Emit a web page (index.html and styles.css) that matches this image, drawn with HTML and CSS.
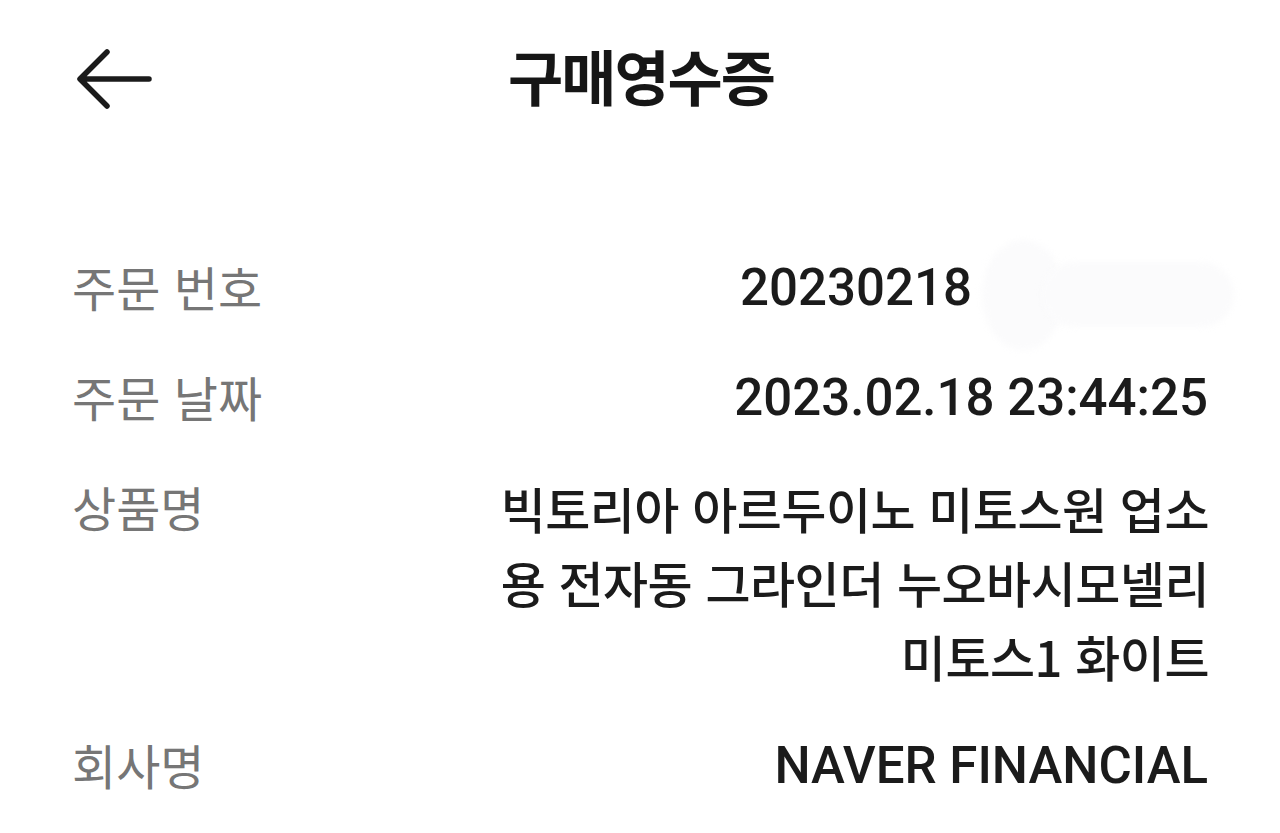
FILE: index.html
```html
<!DOCTYPE html>
<html lang="ko">
<head>
<meta charset="utf-8">
<title>구매영수증</title>
<link rel="stylesheet" href="styles.css">
</head>
<body>
<div class="screen">
  <header class="topbar">
    <div class="back">
      <svg class="back-icon" viewBox="0 0 76 60" width="76" height="60" aria-hidden="true">
        <path d="M73 30 H5 M31 3 L4 30 L31 57" fill="none" stroke="#1b1b1b" stroke-width="5.5" stroke-linecap="round" stroke-linejoin="round"/>
      </svg>
    </div>
    <h1 class="title">구매영수증</h1>
    <div class="spacer"></div>
  </header>

  <main class="rows">
    <div class="row">
      <div class="label">주문 번호</div>
      <div class="value num">20230218<span class="redact"></span></div>
    </div>
    <div class="row">
      <div class="label">주문 날짜</div>
      <div class="value num">2023.02.18 23:44:25</div>
    </div>
    <div class="row">
      <div class="label">상품명</div>
      <div class="value ko">빅토리아 아르두이노 미토스원 업소용 전자동 그라인더 누오바시모넬리 미토스1 화이트</div>
    </div>
    <div class="row">
      <div class="label">회사명</div>
      <div class="value num">NAVER FINANCIAL</div>
    </div>
  </main>
</div>
</body>
</html>
```

FILE: styles.css
```css
html, body {
  margin: 0;
  padding: 0;
  background: #ffffff;
}

body {
  font-family: Roboto, "Noto Sans CJK KR", sans-serif;
  color: #1b1b1b;
}

.screen {
  width: 1280px;
  height: 833px;
  overflow: hidden;
}

.topbar {
  height: 158px;
  display: grid;
  grid-template-columns: 1fr auto 1fr;
  align-items: center;
}

.back {
  padding-left: 76px;
  display: flex;
  align-items: center;
}

.back-icon {
  display: block;
}

.title {
  margin: -8px 0 0 0;
  font-family: "Noto Sans CJK KR", sans-serif;
  font-weight: 700;
  font-size: 60px;
  letter-spacing: -2px;
  line-height: 1;
  color: #161616;
  padding-left: 2px;
}

.rows {
  padding: 93px 72px 0 72px;
  display: flex;
  flex-direction: column;
  gap: 36px;
}

.row {
  display: flex;
  justify-content: space-between;
  align-items: flex-start;
}

.label {
  font-family: "Noto Sans CJK KR", sans-serif;
  font-size: 48px;
  line-height: 74px;
  color: #767676;
  white-space: nowrap;
  margin-top: -2px;
}

.value {
  text-align: right;
  line-height: 74px;
  color: #1b1b1b;
}

.value.num {
  font-family: Roboto, "Noto Sans CJK KR", sans-serif;
  font-weight: 500;
  font-size: 51px;
}

.value.ko {
  max-width: 732px;
  font-family: "Noto Sans CJK KR", sans-serif;
  font-weight: 500;
  font-size: 49px;
  letter-spacing: -0.5px;
  margin-right: -1px;
}

.redact {
  display: inline-block;
  position: relative;
  vertical-align: top;
  width: 236px;
  height: 74px;
}

.redact::before {
  content: "";
  position: absolute;
  left: 10px;
  top: -11px;
  width: 82px;
  height: 110px;
  border-radius: 50%;
  background: #fbfbfc;
  filter: blur(3px);
}

.redact::after {
  content: "";
  position: absolute;
  left: 70px;
  top: 11px;
  width: 192px;
  height: 65px;
  border-radius: 33px;
  background: #fbfbfc;
  filter: blur(3px);
}
```
